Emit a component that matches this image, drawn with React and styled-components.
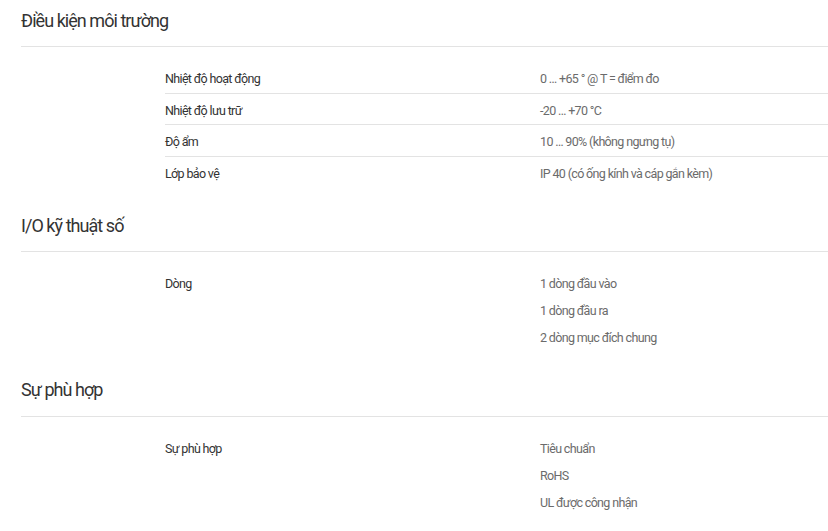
import React from "react";
import styled, { createGlobalStyle } from "styled-components";

const GlobalStyle = createGlobalStyle`
  html, body {
    margin: 0;
    padding: 0;
    background: #ffffff;
  }
  body {
    font-family: Roboto, "Liberation Sans", sans-serif;
    -webkit-font-smoothing: antialiased;
  }
`;

const Page = styled.div`
  padding-left: 21px;
`;

const Section = styled.section`
  display: flex;
  flex-direction: column;
  & + & {
    margin-top: 17.5px;
  }
`;

const Heading = styled.h2`
  margin: 0;
  padding: 8.5px 0 13.5px;
  font-size: 18px;
  line-height: 24px;
  font-weight: 400;
  letter-spacing: -0.95px;
  color: #333333;
  border-bottom: 1px solid #e3e3e3;
`;

const Table = styled.div`
  margin: 15px 0 0 144px;
  display: flex;
  flex-direction: column;
`;

const Row = styled.div`
  display: grid;
  grid-template-columns: 375px 1fr;
  padding: 8px 0 4.5px;
  border-bottom: 1px solid #e3e3e3;
  font-size: 12.5px;
  line-height: 18px;
  letter-spacing: -0.65px;

  &:last-child {
    border-bottom: none;
    padding-bottom: 5px;
  }
`;

const Label = styled.div`
  color: #333333;
`;

const Values = styled.div`
  display: flex;
  flex-direction: column;
  gap: 9px;
  color: #6b6b6b;
`;

const sections = [
  {
    title: "Điều kiện môi trường",
    rows: [
      ["Nhiệt độ hoạt động", ["0 … +65 ° @ T = điểm đo"]],
      ["Nhiệt độ lưu trữ", ["-20 … +70 °C"]],
      ["Độ ẩm", ["10 … 90% (không ngưng tụ)"]],
      ["Lớp bảo vệ", ["IP 40 (có ống kính và cáp gắn kèm)"]],
    ],
  },
  {
    title: "I/O kỹ thuật số",
    rows: [["Dòng", ["1 dòng đầu vào", "1 dòng đầu ra", "2 dòng mục đích chung"]]],
  },
  {
    title: "Sự phù hợp",
    rows: [["Sự phù hợp", ["Tiêu chuẩn", "RoHS", "UL được công nhận"]]],
  },
];

export default function App() {
  return (
    <>
      <GlobalStyle />
      <Page>
        {sections.map((s) => (
          <Section key={s.title}>
            <Heading>{s.title}</Heading>
            <Table>
              {s.rows.map(([label, values]) => (
                <Row key={label}>
                  <Label>{label}</Label>
                  <Values>
                    {values.map((v) => (
                      <span key={v}>{v}</span>
                    ))}
                  </Values>
                </Row>
              ))}
            </Table>
          </Section>
        ))}
      </Page>
    </>
  );
}
